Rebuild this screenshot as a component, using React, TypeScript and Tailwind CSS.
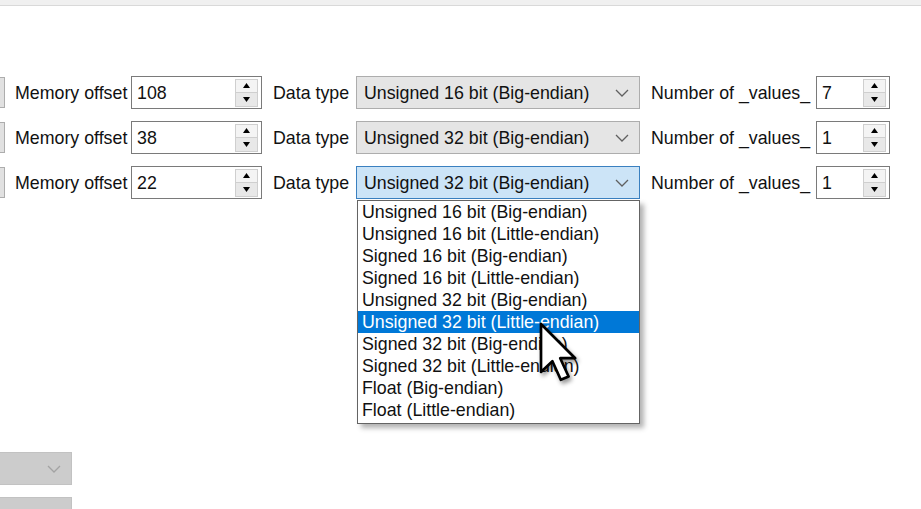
import React from 'react';

const rows = [
  { offset: '108', type: 'Unsigned 16 bit (Big-endian)', count: '7', open: false },
  { offset: '38', type: 'Unsigned 32 bit (Big-endian)', count: '1', open: false },
  { offset: '22', type: 'Unsigned 32 bit (Big-endian)', count: '1', open: true },
];

const options = [
  'Unsigned 16 bit (Big-endian)',
  'Unsigned 16 bit (Little-endian)',
  'Signed 16 bit (Big-endian)',
  'Signed 16 bit (Little-endian)',
  'Unsigned 32 bit (Big-endian)',
  'Unsigned 32 bit (Little-endian)',
  'Signed 32 bit (Big-endian)',
  'Signed 32 bit (Little-endian)',
  'Float (Big-endian)',
  'Float (Little-endian)',
];

const Chevron: React.FC<{ color?: string }> = ({ color = '#606060' }) => (
  <svg width="14" height="8" viewBox="0 0 14 8" className="shrink-0">
    <path d="M1 1 L7 7 L13 1" fill="none" stroke={color} strokeWidth="1.3" />
  </svg>
);

// up / down spinner, like the WinForms NumericUpDown
const Spinner: React.FC = () => (
  <div className="ml-auto mr-[3px] flex flex-col">
    <div className="w-[23px] h-[14px] bg-[#f4f4f4] border border-[#cfcfcf] flex items-center justify-center">
      <svg width="7" height="5" viewBox="0 0 7 5">
        <path d="M0 5 L3.5 0 L7 5 Z" fill="#000" />
      </svg>
    </div>
    <div className="w-[23px] h-[14px] bg-[#e8e8e8] border border-t-0 border-[#cfcfcf] flex items-center justify-center">
      <svg width="7" height="5" viewBox="0 0 7 5">
        <path d="M0 0 L7 0 L3.5 5 Z" fill="#000" />
      </svg>
    </div>
  </div>
);

const NumBox: React.FC<{ value: string; width: string }> = ({ value, width }) => (
  <div className={`${width} h-full flex items-center border border-[#7a7a7a] bg-white pl-[5px]`}>
    <span className="leading-[20px]">{value}</span>
    <Spinner />
  </div>
);

export default function App() {
  return (
    <div className="relative w-[921px] h-[509px] overflow-hidden bg-white text-[#111] text-[17.8px] font-['Liberation_Sans',Arial,sans-serif]">
      <div className="h-[6px] bg-[#f0f0f0] border-b border-[#d9d9d9]" />

      <div className="pt-[70px] flex flex-col gap-[12px]">
        {rows.map((r, i) => (
          <div key={i} className="flex items-center h-[33px]">
            <div className="w-[5px] h-[31px] bg-[#e1e1e1] border border-l-0 border-[#adadad]" />
            <div className="ml-[10px] w-[116px] whitespace-nowrap leading-[20px]">Memory offset</div>
            <NumBox value={r.offset} width="w-[131px]" />
            <div className="ml-[11px] w-[83px] whitespace-nowrap leading-[20px]">Data type</div>
            <div
              className={
                r.open
                  ? 'w-[284px] h-full flex items-center justify-between pl-[7px] pr-[10px] bg-[#cce4f7] border border-[#3a80c0]'
                  : 'w-[284px] h-full flex items-center justify-between pl-[7px] pr-[10px] bg-[#e5e5e5] border border-[#adadad]'
              }
            >
              <span className="whitespace-nowrap leading-[20px]">{r.type}</span>
              <Chevron />
            </div>
            <div className="ml-[11px] w-[165px] whitespace-nowrap leading-[20px]">Number of _values_</div>
            <NumBox value={r.count} width="w-[74px]" />
          </div>
        ))}
      </div>

      <div className="mt-[253px] flex flex-col gap-[12px]">
        <div className="w-[72px] h-[33px] bg-[#cccccc] border border-l-0 border-[#c2c2c2] flex items-center justify-end pr-[10px]">
          <Chevron color="#a3a3a3" />
        </div>
        <div className="w-[72px] h-[33px] bg-[#cccccc] border border-l-0 border-[#c2c2c2]" />
      </div>

      {/* open drop-down list of the third combo */}
      <div className="absolute left-[357px] top-[200px] w-[283px] pb-[2px] bg-white border border-[#646464] shadow-[4px_4px_5px_rgba(0,0,0,0.3)]">
        {options.map((o, i) => (
          <div
            key={o}
            className={
              i === 5
                ? 'h-[22px] leading-[22px] pl-[4px] whitespace-nowrap bg-[#0078d7] text-white'
                : 'h-[22px] leading-[22px] pl-[4px] whitespace-nowrap'
            }
          >
            {o}
          </div>
        ))}
      </div>

      {/* mouse pointer */}
      <svg
        className="absolute left-[538px] top-[321px] drop-shadow-[2px_3px_2px_rgba(0,0,0,0.4)]"
        width="42"
        height="63"
        viewBox="-1 -1 14 21"
      >
        <path
          d="M0 0 L0 16 L3.8 12.4 L6.6 18.6 L9.2 17.5 L6.4 11.4 L11.4 11.4 Z"
          fill="#fff"
          stroke="#000"
          strokeWidth="0.9"
          strokeLinejoin="round"
        />
      </svg>
    </div>
  );
}
